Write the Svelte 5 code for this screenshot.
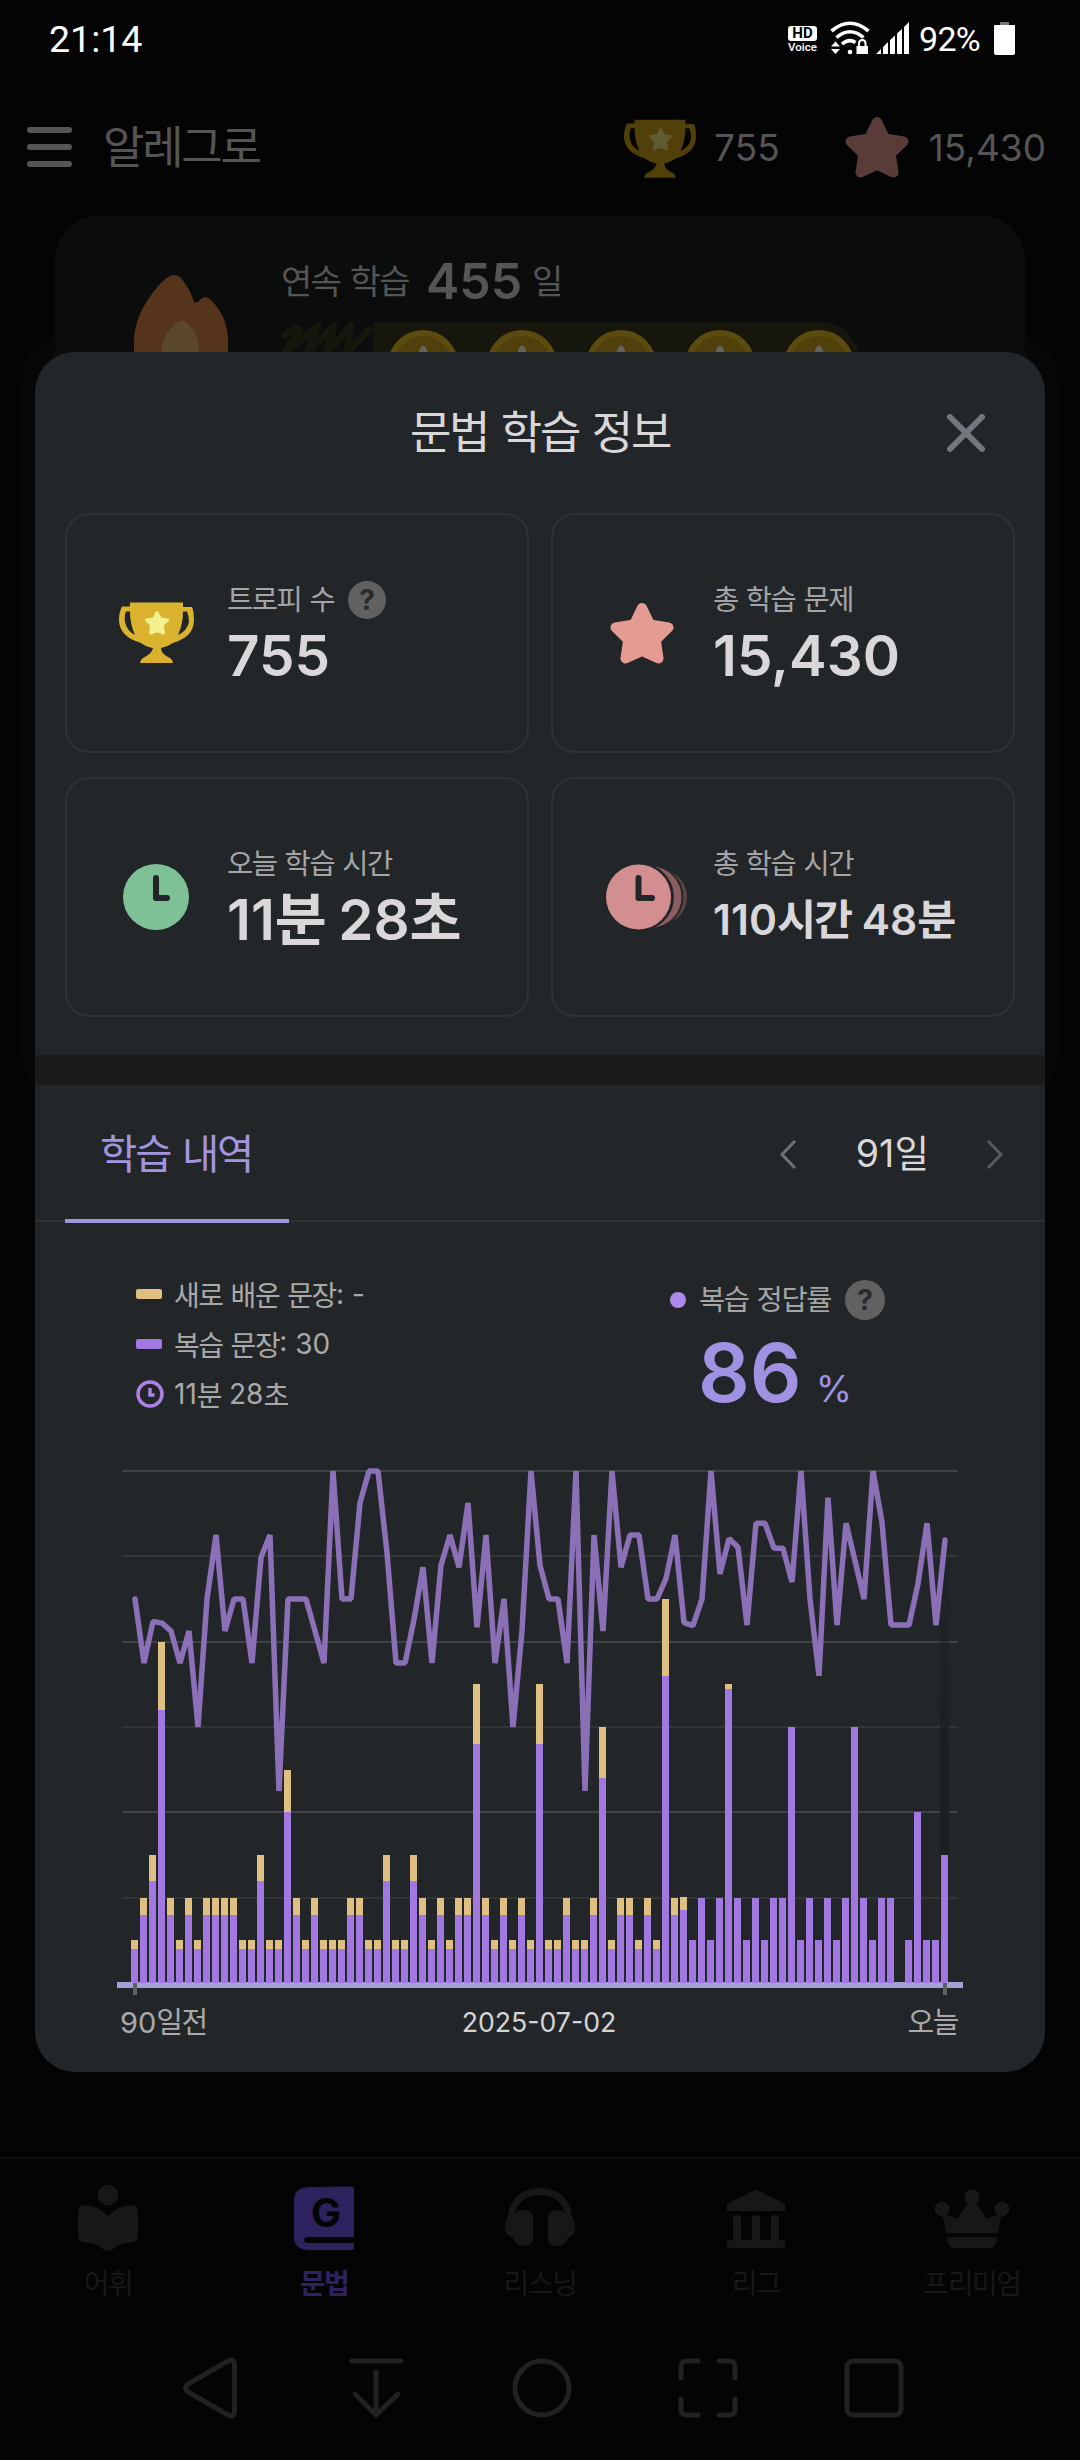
<script>
  // total / review sentences per day, oldest first
  const S = [10, 8];
  const M = [20, 16];
  const L = [30, 24];
  const r = (n) => [n, n];

  const days = [
    S, M, L, [80, 64], M, S, M, S, M, M,
    M, M, S, S, L, S, S, [50, 40], M, S,
    M, S, S, S, M, M, S, S, L, S,
    S, L, M, S, M, S, M, M, [70, 56], M,
    S, M, S, M, S, [70, 56], S, S, M, S,
    S, M, [60, 48], S, M, M, S, M, S, [90, 72],
    M, [20.2, 17], r(10), r(20), r(10), r(20), [70, 69], r(20), r(10), r(20),
    r(10), r(20), r(20), r(60), r(10), r(20), r(10), r(20), r(10), r(20),
    r(60), r(20), r(10), r(20), r(20), r(0), r(10), r(40), r(10), r(10),
    r(30),
  ];

  // review accuracy in percent
  const accuracy = [
    75, 62.5, 70.6, 70.3, 68.75, 62.5, 68.75, 50, 75, 87.5,
    68.75, 75, 75, 62.5, 83.1, 87.5, 37.5, 75, 75, 75,
    68.75, 62.5, 100, 75, 75, 93.75, 100, 100, 84, 62.5,
    62.5, 71, 81.2, 62.5, 81.6, 87.5, 81.2, 93.75, 69.5, 87.5,
    62.5, 75, 50, 68.75, 100, 81.6, 75, 75, 62.5, 100,
    37.5, 87.5, 68.75, 100, 81.2, 87.5, 87.5, 75, 75, 79,
    87.5, 70.4, 69.8, 75, 100, 79.9, 86.8, 85.1, 69.9, 89.8,
    89.8, 84.9, 84.9, 78.3, 100, 75, 60, 94.8, 69.9, 89.8,
    82.5, 75, 100, 90, 69.9, 69.9, 69.9, 78, 89.8, 69.9,
    86.5,
  ];

  const plotHeight = 512;
  const top = 3;
  const base = top + plotHeight;
  const maxCount = 120;

  const barY = (n) => Math.round(base - (n / maxCount) * plotHeight);
  const line = accuracy
    .map((p, i) => `${18 + i * 9},${(base - (p / 100) * plotHeight).toFixed(1)}`)
    .join(' ');

  const grid = [0, 1, 2, 3, 4, 5].map((i) => ({
    y: Math.round(top + (i * plotHeight) / 6),
    strong: i % 2 === 0,
  }));

  const tabs = [
    { id: 'vocab', label: '어휘' },
    { id: 'grammar', label: '문법' },
    { id: 'listening', label: '리스닝' },
    { id: 'league', label: '리그' },
    { id: 'premium', label: '프리미엄' },
  ];
  let current = $state('grammar');
  const coins = [1, 2, 3, 4, 5];

  // Hangul is set tighter than the digits next to it
  const runs = (text) => text.split(/([\uac00-\ud7a3]+)/).filter(Boolean);
  const isHangul = (s) => /[\uac00-\ud7a3]/.test(s);
</script>

{#snippet t(text)}{#each runs(text) as run}<span class:ko={isHangul(run)}>{run}</span>{/each}{/snippet}

{#snippet trophy()}
  <svg class="trophy" viewBox="0 0 75 61">
    <path class="cup" d="M11 0.5H64V5H73Q75 10 75 18C75 31 66 37 54 41Q48 45 42 46C42 51 47 54 51 56Q54 58 54 61H21Q21 58 24 56C28 54 33 51 34 46Q27 45 22 41C9 37 0 30 0 18Q0 10 3 4.500H11ZM11 9.500H7Q5 14 6 20Q8 29 16 33Q11 22 11 9.500ZM64 9.500Q64 22 59 33Q68 29 70 20Q70 14 68 9.500Z" />
    <path class="cup-star" stroke-width="3" stroke-linejoin="round" d="M38 10.500L41.200 17L48.500 18L43.200 23L44.500 31L38 28.500L31.500 31L32.800 23L27.500 18L34.800 17Z" />
  </svg>
{/snippet}

{#snippet star()}
  <svg class="star" viewBox="0 0 64 62">
    <path stroke-width="10" stroke-linejoin="round" d="M32 6L40 22.500L58.500 25.500L45.800 38L48.500 56.500L32 49L15.500 56.500L18.200 38L5.500 25.500L24 22.500Z" />
  </svg>
{/snippet}

<div class="screen">
  <div class="status">
    <span class="time">21:14</span>
    <div class="status-icons">
      <div class="hd"><b>HD</b><span>Voice</span></div>
      <svg class="wifi" width="40" height="34" viewBox="0 0 40 34">
        <g fill="none" stroke="#fff" stroke-width="3.600">
          <path d="M1.500 10Q20 -5.500 38.500 10" />
          <path d="M6.500 16.500Q20 5 33.500 16.500" />
          <path d="M12 23Q19 17 25.500 21.500" />
        </g>
        <path d="M1 25.500L5.500 20.500L10 25.500ZM1 28H10L5.500 33Z" fill="#fff" />
        <circle cx="20" cy="31" r="2.300" fill="#fff" />
        <path d="M26.500 25H38V33H26.500Z" fill="#fff" />
        <path d="M29 25V22.500Q29 19 32.300 19Q35.500 19 35.500 22.500V25" fill="none" stroke="#fff" stroke-width="2" />
      </svg>
      <svg class="signal" width="34" height="33" viewBox="0 0 34 33">
        <path fill="#fff" d="M0 32L5 27V32ZM7 25L12 20V32H7ZM14 18L19 13.500V32H14ZM21 11.500L26 7V32H21ZM28 5L33 0V32H28Z" />
      </svg>
      <span class="pct">92%</span>
      <svg class="battery" width="21" height="33" viewBox="0 0 21 33">
        <path fill="#777" d="M6 0H15V3H6Z" />
        <path fill="#fff" d="M0 4Q0 3 1 3H20Q21 3 21 4V31Q21 33 19 33H2Q0 33 0 31Z" />
      </svg>
    </div>
  </div>

  <header class="topbar">
    <div class="menu"><i></i><i></i><i></i></div>
    <h1>{@render t('알레그로')}</h1>
    <div class="score">{@render trophy()}<span>755</span></div>
    <div class="score second">{@render star()}<span>15,430</span></div>
  </header>

  <div class="backdrop-panel"></div>

  <section class="streak">
    <svg class="flame" width="94" height="120" viewBox="0 0 94 120">
      <path fill="#55341b" d="M0 66C0 35 28 4 36 1Q42 -2 47 3Q56 14 60 27Q62 29 65 26Q71 19 77 25Q94 42 94 66V120H0Z" />
      <path fill="#5b472b" d="M28 72C28 61 38 52 43 48Q48 44 53 48Q65 60 65 72V120H28Z" />
    </svg>
    <div class="streak-body">
      <p><span>{@render t('연속 학습')}</span><b>455</b>{@render t('일')}</p>
      <div class="week">
        <svg class="scribble" width="92" height="60" viewBox="0 0 92 60">
          <path fill="none" stroke="#17160c" stroke-width="7" stroke-linecap="round" stroke-linejoin="round" d="M4 13Q22 2 18 10L3 32L37 4L25 32L53 4L45 32L70 4L66 30L88 8" />
        </svg>
        <div class="coins">
          {#each coins as coin (coin)}<i class="coin"></i>{/each}
        </div>
        <i class="coin empty"></i>
      </div>
    </div>
  </section>

  <nav class="tabs">
    {#each tabs as tab (tab.id)}
      <button class:active={current === tab.id} onclick={() => (current = tab.id)}>
        <svg width="76" height="70" viewBox="0 0 76 70">
          {#if tab.id === 'vocab'}
            <circle cx="38" cy="12" r="10.300" />
            <path d="M13 22Q27 22 38 33Q49 22 63 22Q68 23 68 28V53Q68 58 63 59Q49 60 42 67Q38 69 34 67Q27 60 13 59Q8 58 8 53V28Q8 23 13 22Z" />
          {:else if tab.id === 'grammar'}
            <path d="M22 4Q8 5 8 18V54Q8 66 22 67H65Q68 67 68 65V60H22Q18 60 18 57Q18 54 22 54H68V6Q68 3.500 65 3.500Z" />
            <text x="40" y="44" text-anchor="middle">G</text>
          {:else if tab.id === 'listening'}
            <path d="M6 34C7 17 19 5 38 5S69 17 70 34Q74 38 73 47Q72 53 66 54Q63 63 57 63Q46 64 46 56V35Q46 27 56 27Q61 27 63 31C61 19 51 12 38 12S15 19 13 31Q15 27 21 27Q31 27 31 35V56Q31 63 20 63Q14 63 11 54Q4 53 3 47Q2 38 6 34Z" />
          {:else if tab.id === 'league'}
            <path d="M35 8Q38 6 41 8L67 21V28H9V21ZM15 35Q15 32 19 32Q23 32 23 35V57H34V35Q34 32 38 32Q42 32 42 35V57H53V35Q53 32 57 32Q61 32 61 35V57Q67 57 67 60V65H9V60Q9 57 15 57Z" />
          {:else}
            <circle cx="8" cy="26" r="7.500" /><circle cx="68" cy="26" r="7.500" /><circle cx="38" cy="14" r="7.500" />
            <path d="M8 30L23 36L36 16H40L53 36L68 30L64 50H12ZM13 54H63Q62 65 57 65H19Q14 65 13 54Z" />
          {/if}
        </svg>
        <span>{@render t(tab.label)}</span>
      </button>
    {/each}
  </nav>

  <div class="sysnav">
    <svg width="60" height="64" viewBox="0 0 60 64"><path d="M48 5Q54 2 54.500 9V55Q54 62 48 59L8 36Q3 32 8 28Z" /></svg>
    <svg width="60" height="64" viewBox="0 0 60 64"><path d="M6 5H55M30 16V59M9 38L30 59L52 38" /></svg>
    <svg width="60" height="64" viewBox="0 0 60 64"><circle cx="30" cy="32" r="27" /></svg>
    <svg width="60" height="64" viewBox="0 0 60 64"><path d="M3 22V11Q3 5 9 5H20M41 5H51Q57 5 57 11V22M57 43V53Q57 59 51 59H41M20 59H9Q3 59 3 53V43" /></svg>
    <svg width="60" height="64" viewBox="0 0 60 64"><rect x="3" y="5" width="54" height="54" rx="6" /></svg>
  </div>

  <div class="dialog">
    <div class="dialog-title">
      <h2>{@render t('문법 학습 정보')}</h2>
      <svg class="close" width="38" height="38" viewBox="0 0 38 38"><path d="M3 3L35 35M35 3L3 35" /></svg>
    </div>

    <div class="cards">
      <div class="card">
        <div class="icon">{@render trophy()}</div>
        <div class="info">
          <p class="label">{@render t('트로피 수')}<i class="help">?</i></p>
          <p class="value">755</p>
        </div>
      </div>
      <div class="card">
        <div class="icon">{@render star()}</div>
        <div class="info">
          <p class="label">{@render t('총 학습 문제')}</p>
          <p class="value">15,430</p>
        </div>
      </div>
      <div class="card">
        <div class="icon">
          <svg width="66" height="66" viewBox="0 0 66 66">
            <circle cx="33" cy="33" r="33" fill="#7fc197" />
            <path d="M33 14V34H44" fill="none" stroke="#232629" stroke-width="6" stroke-linecap="round" stroke-linejoin="round" />
          </svg>
        </div>
        <div class="info">
          <p class="label">{@render t('오늘 학습 시간')}</p>
          <p class="value">{@render t('11분 28초')}</p>
        </div>
      </div>
      <div class="card">
        <div class="icon wide">
          <svg width="82" height="66" viewBox="0 0 82 66">
            <circle cx="53.500" cy="33" r="27.500" fill="#5a4446" />
            <circle cx="46" cy="33" r="31.500" fill="#232629" />
            <circle cx="45" cy="33" r="30.500" fill="#895f61" />
            <circle cx="34" cy="33" r="34" fill="#232629" />
            <circle cx="32.500" cy="33" r="32.500" fill="#d38e8f" />
            <path d="M32.500 14V34H46" fill="none" stroke="#232629" stroke-width="6" stroke-linecap="round" stroke-linejoin="round" />
          </svg>
        </div>
        <div class="info">
          <p class="label">{@render t('총 학습 시간')}</p>
          <p class="value small">{@render t('110시간 48분')}</p>
        </div>
      </div>
    </div>

    <div class="band"></div>

    <div class="history-head">
      <span class="tab-label">{@render t('학습 내역')}</span>
      <div class="range">
        <svg width="17" height="31" viewBox="0 0 17 31"><path d="M15 2L2 15.500L15 29" /></svg>
        <span>{@render t('91일')}</span>
        <svg class="next" width="17" height="31" viewBox="0 0 17 31"><path d="M2 2L15 15.500L2 29" /></svg>
      </div>
    </div>

    <div class="summary">
      <ul>
        <li><i class="key new"></i>{@render t('새로 배운 문장: -')}</li>
        <li><i class="key review"></i>{@render t('복습 문장: 30')}</li>
        <li>
          <svg class="clock" width="28" height="28" viewBox="0 0 28 28"><circle cx="14" cy="14" r="12" /><path d="M14 8V15H18.500" /></svg>
          {@render t('11분 28초')}
        </li>
      </ul>
      <div class="accuracy">
        <p class="label"><i class="dot"></i>{@render t('복습 정답률')}<i class="help">?</i></p>
        <p class="rate">86<span>%</span></p>
      </div>
    </div>

    <svg class="chart" width="846" height="530" viewBox="0 0 846 530">
      <defs>
        <linearGradient id="today" x1="0" y1="0" x2="0" y2="1">
          <stop offset="0" stop-color="#1d1f22" stop-opacity="0" />
          <stop offset="0.500" stop-color="#1d1f22" />
          <stop offset="1" stop-color="#1d1f22" />
        </linearGradient>
      </defs>
      {#each grid as g}
        <rect class="grid" class:strong={g.strong} x="5" y={g.y - 1} width="836" height="2" />
      {/each}
      <rect x="823" y="62" width="9" height={base - 62} fill="url(#today)" />
      <rect class="axis" x="0" y={base - 1} width="846" height="6" />
      {#each days as [total, review], i}
        <rect class="bar-new" x={14 + i * 9} y={barY(total)} width="7" height={base - barY(total)} />
        <rect class="bar-review" x={14 + i * 9} y={barY(review)} width="7" height={base - barY(review)} />
      {/each}
      <polyline class="line" points={line} />
      <rect class="tick" x="16" y={base} width="4" height="12" />
      <rect class="tick" x="826" y={base} width="4" height="12" />
    </svg>

    <div class="dates">
      <span>{@render t('90일전')}</span>
      <span class="mid">2025-07-02</span>
      <span>{@render t('오늘')}</span>
    </div>
  </div>
</div>

<style>
:global(body) {
  margin: 0;
  background: #040404;
}

.screen {
  position: relative;
  display: flex;
  flex-direction: column;
  width: 1080px;
  height: 2460px;
  overflow: hidden;
  background: #040404;
  color: #d9d7d9;
  font-family: Inter, "Noto Sans CJK KR", sans-serif;
}

h1, h2, p, ul {
  margin: 0;
  padding: 0;
  font-weight: 400;
}

i {
  font-style: normal;
}

.ko {
  letter-spacing: -0.05em;
}

.status {
  display: flex;
  justify-content: space-between;
  align-items: center;
  height: 76px;
  padding: 0 65px 0 49px;
  box-sizing: border-box;
  font-family: Roboto, sans-serif;
  color: #fff;
}

.time {
  padding-top: 2px;
  font-size: 37.500px;
}

.status-icons {
  display: flex;
  align-items: center;
}

.hd {
  display: flex;
  flex-direction: column;
  align-items: center;
  width: 29px;
  margin-right: 13px;
  padding-top: 3px;
}

.hd b {
  width: 29px;
  height: 15px;
  border-radius: 3px;
  background: #fff;
  color: #000;
  font-size: 15px;
  line-height: 15px;
  text-align: center;
}

.hd span {
  font-size: 11.500px;
  line-height: 12px;
  font-weight: 500;
}

.wifi {
  margin-right: 6px;
}

.signal {
  margin-right: 9px;
}

.pct {
  width: 62px;
  margin-right: 13px;
  padding-top: 2px;
  font-size: 34px;
  letter-spacing: -0.700px;
}

.topbar {
  display: flex;
  align-items: center;
  height: 140px;
  padding: 2px 34px 0 27px;
  box-sizing: border-box;
  color: #555;
}

.menu {
  display: flex;
  flex-direction: column;
  gap: 11px;
  margin-right: 31px;
}

.menu i {
  width: 45px;
  height: 6px;
  border-radius: 3px;
  background: #555;
}

h1 {
  flex: 1;
  padding-top: 2px;
  font-size: 45px;
  line-height: 60px;
}

.score {
  display: flex;
  align-items: center;
  font-size: 37px;
}

.score .trophy {
  width: 72px;
  height: 59px;
  margin: 2px 18px 0 0;
}

.score.second {
  margin-left: 65px;
}

.score.second .star {
  margin-right: 20px;
}

.trophy {
  width: 75px;
  height: 61px;
}

.star {
  width: 64px;
  height: 62px;
}

.trophy .cup {
  fill: #dbb22e;
}

.trophy .cup-star {
  fill: #f2f18f;
  stroke: #f2f18f;
}

.star path {
  fill: #e49c92;
  stroke: #e49c92;
}

.score .cup {
  fill: #52400b;
}

.score .cup-star {
  fill: #5e5b31;
  stroke: #5e5b31;
}

.score .star path {
  fill: #593b37;
  stroke: #593b37;
}

.backdrop-panel {
  position: absolute;
  left: 22px;
  top: 335px;
  width: 1036px;
  height: 765px;
  border-radius: 44px;
  background: #070707;
}

.streak {
  position: relative;
  display: flex;
  align-items: flex-start;
  width: 970px;
  height: 220px;
  margin: 0 auto;
  padding-left: 79px;
  box-sizing: border-box;
  border-radius: 44px;
  background: #0b0d0d;
  color: #555;
}

.flame {
  margin: 59px 53px 0 0;
}

.streak-body p {
  display: flex;
  align-items: center;
  height: 60px;
  margin-top: 36px;
  font-size: 34px;
  line-height: 60px;
}

.streak-body b {
  margin: -3px 10px 0 17px;
  font-size: 50px;
  font-weight: 600;
}

.week {
  display: flex;
  margin-top: 10px;
}

.coins {
  display: flex;
  gap: 29px;
  width: 487px;
  height: 70px;
  padding: 8px 0 0 15px;
  box-sizing: border-box;
  border-radius: 0 40px 0 0;
  background: #17160c;
}

.coin {
  width: 70px;
  height: 70px;
  flex: none;
  border-radius: 50%;
  border: 6px solid #5c4b0e;
  box-sizing: border-box;
  background: radial-gradient(ellipse 5px 12px at 50% 21px, #66635c 90%, transparent) #50400b;
}

.coin.empty {
  margin: 8px 0 0 23px;
  border: 0;
  background: #0d0b0c;
}

.tabs {
  display: flex;
  height: 159px;
  margin-top: auto;
  border-top: 2px solid #0d1010;
  box-sizing: border-box;
}

.tabs button {
  flex: 1;
  display: flex;
  flex-direction: column;
  align-items: center;
  padding: 24px 0 0;
  border: 0;
  background: none;
  color: #171717;
  font: 400 28px/36px Inter, "Noto Sans CJK KR", sans-serif;
}

.tabs svg {
  fill: #171717;
}

.tabs span {
  white-space: nowrap;
}

.tabs button > span {
  margin-top: 13px;
}

.tabs .active {
  color: #2d215e;
  font-weight: 700;
}

.tabs .active svg {
  fill: #2d215e;
}

.tabs text {
  fill: #040404;
  font: 700 40px Inter, sans-serif;
}

.sysnav {
  display: flex;
  align-items: center;
  gap: 106px;
  height: 144px;
  padding-left: 180px;
}

.sysnav svg {
  fill: none;
  stroke: #212121;
  stroke-width: 5;
  stroke-linecap: round;
  stroke-linejoin: round;
}

.dialog {
  position: absolute;
  left: 35px;
  top: 352px;
  width: 1010px;
  height: 1720px;
  border-radius: 40px;
  overflow: hidden;
  background: #232629;
}

.dialog-title {
  display: grid;
  grid-template-columns: 1fr auto 1fr;
  align-items: center;
  height: 161px;
}

h2 {
  grid-column: 2;
  font-size: 45px;
  line-height: 60px;
}

.close {
  justify-self: end;
  margin-right: 60px;
  fill: none;
  stroke: #72787e;
  stroke-width: 6;
  stroke-linecap: round;
}

.cards {
  display: grid;
  grid-template-columns: 464px 464px;
  gap: 24px 22px;
  padding: 0 30px;
}

.card {
  display: flex;
  align-items: center;
  height: 240px;
  padding: 0 0 1px 51px;
  box-sizing: border-box;
  border: 2px solid #303234;
  border-radius: 24px;
}

.icon {
  display: flex;
  justify-content: center;
  width: 76px;
  margin-right: 33px;
}

.icon.wide {
  justify-content: flex-start;
}

.icon.wide svg {
  margin-left: 2px;
}

.icon svg {
  flex: none;
}

.label {
  display: flex;
  align-items: center;
  height: 46px;
  color: #a5a5a5;
  font-size: 28.500px;
  line-height: 46px;
  white-space: pre;
}

.help {
  width: 38px;
  height: 38px;
  margin-left: 14px;
  border-radius: 50%;
  background: #606160;
  color: #2a2b2d;
  font-size: 28px;
  line-height: 38px;
  font-weight: 700;
  text-align: center;
}

.value {
  height: 66px;
  font-size: 56.500px;
  line-height: 66px;
  font-weight: 600;
  white-space: nowrap;
}

.value.small {
  font-size: 42.500px;
}

.band {
  height: 30px;
  margin-top: 38px;
  background: #1a1b1d;
}

.history-head {
  display: flex;
  justify-content: space-between;
  height: 137px;
  padding: 0 42px 0 30px;
  box-sizing: border-box;
  border-bottom: 2px solid #303234;
}

.tab-label {
  width: 224px;
  margin-bottom: -3px;
  padding-left: 35px;
  box-sizing: border-box;
  border-bottom: 4px solid #a295e0;
  color: #a295e0;
  font-size: 40.500px;
  line-height: 139px;
}

.range {
  display: flex;
  align-items: center;
  gap: 59px;
  padding-top: 3px;
  font-size: 37.500px;
  line-height: 50px;
}

.range svg {
  fill: none;
  stroke: #6a747b;
  stroke-width: 3;
}

.range .next {
  stroke: #555b60;
}

.summary {
  display: flex;
  height: 246px;
  box-sizing: border-box;
  padding: 48px 0 0 101px;
  color: #a9a9a9;
  font-size: 28px;
}

.summary ul {
  width: 534px;
  margin-top: -1px;
  list-style: none;
}

.summary li {
  display: flex;
  align-items: center;
  height: 50px;
  white-space: pre;
}

.key {
  width: 26px;
  height: 10px;
  margin-right: 12px;
  border-radius: 2px;
}

.key.new {
  background: #dfbf82;
}

.key.review {
  background: #a078e0;
}

.clock {
  margin-right: 10px;
  fill: none;
  stroke: #ac80e4;
  stroke-width: 3.500;
}

.accuracy .label {
  margin-top: 7px;
}

.accuracy .help {
  width: 40px;
  height: 40px;
  line-height: 40px;
}

.dot {
  width: 16px;
  height: 16px;
  margin-right: 13px;
  border-radius: 50%;
  background: #ac8aeb;
}

.rate {
  padding-left: 28px;
  color: #9f92e3;
  font-size: 81px;
  line-height: 100px;
  font-weight: 600;
}

.rate span {
  margin-left: 14px;
  font-size: 37px;
  font-weight: 400;
}

.chart {
  display: block;
  margin-left: 82px;
}

.grid {
  fill: #323436;
}

.grid.strong {
  fill: #3e4346;
}

.axis {
  fill: #a3a1d6;
}

.bar-new {
  fill: #dfbf82;
}

.bar-review {
  fill: #a078e0;
}

.line {
  fill: none;
  stroke: #8b70b7;
  stroke-width: 5.500;
  stroke-linejoin: bevel;
  stroke-linecap: round;
}

.tick {
  fill: #5f6062;
}

.dates {
  display: grid;
  grid-template-columns: 1fr auto 1fr;
  align-items: center;
  height: 44px;
  padding: 0 87px 0 85px;
  color: #a9a9a9;
  font-size: 29px;
}

.dates .mid {
  padding-top: 4px;
  color: #d5d4d5;
  font-size: 26.700px;
}

.dates span:last-child {
  text-align: right;
}
</style>
